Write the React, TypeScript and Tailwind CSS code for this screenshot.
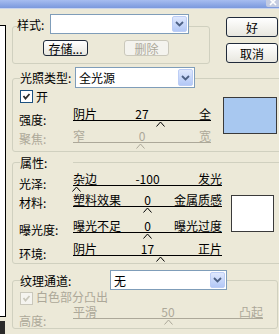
import React from "react";

const GRAY = "#aca899";

function Chevron() {
    return (
        <svg width="9" height="6" viewBox="0 0 9 6">
            <path d="M1 1l3.5 3.5L8 1" fill="none" stroke="#4d6185" strokeWidth="1.8" />
        </svg>
    );
}

function Combo({ size, value }: { size: string; value: string }) {
    return (
        <div className={`flex items-stretch border border-[#7f9db9] bg-white ${size}`}>
            <span className="flex flex-1 items-center pl-[3px]">{value}</span>
            <span className="m-px flex w-[15px] items-center justify-center rounded-[2px] border border-[#bccdf5] bg-linear-to-b from-[#dfe8fd] to-[#b3c8f6]">
                <Chevron />
            </span>
        </div>
    );
}

function Check({ disabled }: { disabled?: boolean }) {
    return (
        <span
            className={`flex h-[13px] w-[13px] items-center justify-center border ${
                disabled ? "border-[#cac8bb] bg-[#f5f4ef]" : "border-[#1c5180] bg-white"
            }`}
        >
            <svg width="9" height="9" viewBox="0 0 9 9">
                <polyline
                    points="1.5,4 3.5,6.5 7.5,2"
                    fill="none"
                    stroke={disabled ? "#cac8bb" : "#2b2b2b"}
                    strokeWidth="1.8"
                />
            </svg>
        </span>
    );
}

type SliderProps = {
    label: string;
    row: string;
    labelPad: string;
    width: string;
    left: string;
    value: string;
    right: string;
    caret: number;
    disabled?: boolean;
};

function SliderRow({ label, row, labelPad, width, left, value, right, caret, disabled }: SliderProps) {
    const tone = disabled ? "border-[#aca899] text-[#aca899]" : "border-black text-black";
    return (
        <div className={`ml-[2px] flex ${row}`}>
            <div className={`w-[54px] ${labelPad} ${disabled ? "text-[#aca899]" : ""}`}>{label}</div>
            <div className={`relative h-[14px] border-b ${width} ${tone}`}>
                <div className="grid grid-cols-[1fr_auto_1fr]">
                    <span>{left}</span>
                    <span>{value}</span>
                    <span className="text-right">{right}</span>
                </div>
                <svg width="9" height="6" className="absolute top-full mt-px" style={{ left: caret - 4 }}>
                    <polyline
                        points="0.5,5.5 4.5,1 8.5,5.5"
                        fill="none"
                        stroke={disabled ? GRAY : "#000"}
                    />
                </svg>
            </div>
        </div>
    );
}

function Btn({ label, disabled, size }: { label: string; disabled?: boolean; size: string }) {
    return (
        <button
            className={`flex items-center justify-center rounded-[3px] border ${size} ${
                disabled
                    ? "border-[#cac8bb] bg-[#f4f3ee] text-[#aca899]"
                    : "border-[#202a3a] bg-linear-to-b from-white to-[#e8e7df]"
            }`}
        >
            {label}
        </button>
    );
}

export default function App() {
    return (
        <div className="relative h-[334px] w-[279px] overflow-hidden bg-[#ece9d8] font-['Noto_Sans_CJK_SC',sans-serif] text-[12px] leading-[13px] text-black">
            <div className="flex h-[9px] justify-end border-b border-[#c9d4ec] bg-linear-to-b from-[#a6bdf0] to-[#7b99dd]">
                <div className="flex h-[7px] w-[13px] items-start justify-center rounded-bl-[2px] bg-[#c3cbe1]">
                    <svg width="8" height="6" viewBox="0 0 8 6">
                        <path d="M1 -1l6 6M7 -1l-6 6" stroke="#fff" strokeWidth="1.6" />
                    </svg>
                </div>
            </div>

            <div className="flex">
                <div className="flex flex-col">
                    <div className="mt-[16px] h-[292px] w-[6px] border-t border-r border-b border-black bg-white" />
                    <div className="mt-[4px] h-[14px] w-[5px] bg-[#2a2a2a]" />
                </div>

                <div className="ml-[6px] flex flex-col">
                    <div className="flex items-start">
                        <fieldset className="mt-[5px] w-[198px] rounded-[3px] border border-[#d0d0bf] px-[4px] pb-[7px]">
                            <legend className="pb-[5px]">
                                <div className="flex items-center">
                                    <span className="w-[33px]">样式:</span>
                                    <Combo size="h-[20px] w-[139px]" value="" />
                                </div>
                            </legend>
                            <div className="mt-px ml-[26px] flex gap-[36px]">
                                <Btn label="存储..." size="h-[16px] w-[45px]" />
                                <Btn label="删除" size="h-[16px] w-[45px]" disabled />
                            </div>
                        </fieldset>
                        <div className="mt-[8px] ml-[16px] flex flex-col gap-[6px]">
                            <Btn label="好" size="h-[20px] w-[52px]" />
                            <Btn label="取消" size="h-[20px] w-[52px]" />
                        </div>
                    </div>

                    <fieldset className="mt-[3px] w-[270px] rounded-[3px] border border-[#d0d0bf] pl-[4px]">
                        <legend className="ml-[3px] pb-[2px]">
                            <div className="flex items-center">
                                <span className="w-[55px]">光照类型:</span>
                                <Combo size="h-[21px] w-[120px]" value="全光源" />
                            </div>
                        </legend>
                        <div className="flex items-start">
                            <div className="flex flex-col">
                                <div className="ml-[3px] flex h-[17px] items-start">
                                    <Check />
                                    <span className="ml-[3px]">开</span>
                                </div>
                                <SliderRow label="强度:" row="h-[22px]" labelPad="pt-[6px]" width="w-[138px]" left="阴片" value="27" right="全" caret={87} />
                                <SliderRow label="聚焦:" row="h-[22px]" labelPad="pt-[3px]" width="w-[138px]" left="窄" value="0" right="宽" caret={67} disabled />
                            </div>
                            <div className="mt-[7px] ml-[12px] h-[37px] w-[54px] border border-[#3a3a3a] bg-[#a8c8f0]" />
                        </div>
                    </fieldset>

                    <fieldset className="mt-[3px] w-[270px] rounded-[3px] border border-[#d0d0bf] pl-[4px]">
                        <legend className="ml-[3px]">
                            <div className="h-[15px] w-[53px] leading-[15px]">属性:</div>
                        </legend>
                        <div className="mt-[2px] flex items-start">
                            <div className="flex flex-col">
                                <SliderRow label="光泽:" row="h-[21px]" labelPad="pt-[5px]" width="w-[149px]" left="杂边" value="-100" right="发光" caret={3} />
                                <SliderRow label="材料:" row="h-[26px]" labelPad="pt-[3px]" width="w-[149px]" left="塑料效果" value="0" right="金属质感" caret={74} />
                                <SliderRow label="曝光度:" row="h-[23px]" labelPad="pt-[4px]" width="w-[149px]" left="曝光不足" value="0" right="曝光过度" caret={74} />
                                <SliderRow label="环境:" row="h-[21px]" labelPad="pt-[5px]" width="w-[149px]" left="阴片" value="17" right="正片" caret={87} />
                            </div>
                            <div className="mt-[23px] ml-[9px] h-[37px] w-[43px] border border-[#3a3a3a] bg-white" />
                        </div>
                    </fieldset>

                    <fieldset className="mt-[6px] w-[266px] rounded-[3px] border border-[#d0d0bf] pl-[4px]">
                        <legend className="ml-[3px]">
                            <div className="flex items-center">
                                <span className="w-[90px]">纹理通道:</span>
                                <Combo size="h-[20px] w-[117px]" value="无" />
                            </div>
                        </legend>
                        <div className="ml-[3px] flex h-[15px] items-start">
                            <span className="mt-[2px]">
                                <Check disabled />
                            </span>
                            <span className="ml-[3px] h-[13px] text-[#aca899]">白色部分凸出</span>
                        </div>
                        <SliderRow label="高度:" row="h-[23px]" labelPad="pt-[9px]" width="w-[190px]" left="平滑" value="50" right="凸起" caret={95} disabled />
                    </fieldset>
                </div>
            </div>
        </div>
    );
}
